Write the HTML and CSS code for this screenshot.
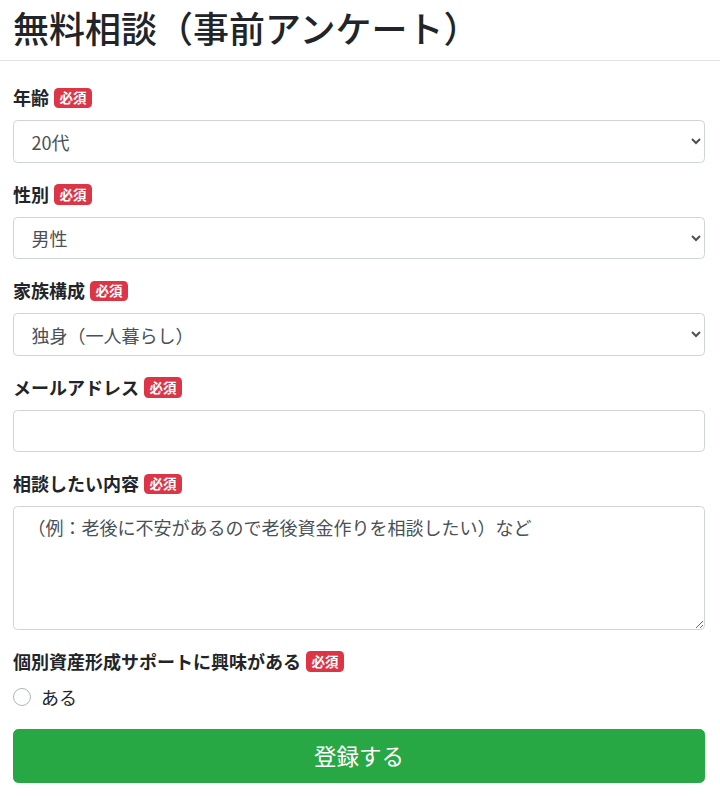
FILE: index.html
```html
<!DOCTYPE html>
<html lang="ja">
<head>
<meta charset="utf-8">
<title>無料相談（事前アンケート）</title>
<link rel="stylesheet" href="styles.css">
</head>
<body>
<header class="page-header">
  <h1 class="title">無料相談（事前アンケート）</h1>
</header>
<form class="form">
  <div class="group">
    <label class="label" for="age">年齢<span class="badge">必須</span></label>
    <select id="age" class="control select">
      <option>20代</option>
    </select>
  </div>
  <div class="group">
    <label class="label" for="sex">性別<span class="badge">必須</span></label>
    <select id="sex" class="control select">
      <option>男性</option>
    </select>
  </div>
  <div class="group">
    <label class="label" for="family">家族構成<span class="badge">必須</span></label>
    <select id="family" class="control select">
      <option>独身（一人暮らし）</option>
    </select>
  </div>
  <div class="group">
    <label class="label" for="mail">メールアドレス<span class="badge">必須</span></label>
    <input id="mail" class="control" type="email">
  </div>
  <div class="group">
    <label class="label" for="content">相談したい内容<span class="badge">必須</span></label>
    <textarea id="content" class="control textarea" rows="4" placeholder="（例：老後に不安があるので老後資金作りを相談したい）など"></textarea>
  </div>
  <div class="group">
    <div class="label">個別資産形成サポートに興味がある<span class="badge">必須</span></div>
    <label class="check">
      <input class="radio" type="radio" name="interest">
      <span>ある</span>
    </label>
  </div>
  <button class="submit" type="button">登録する</button>
</form>
</body>
</html>
```
FILE: styles.css
```css
html {
  font-size: 18px;
}
body {
  margin: 0;
  font-family: "Noto Sans CJK JP", "Noto Sans", sans-serif;
  font-size: 18px;
  line-height: 1.5;
  color: #212529;
  background: #fff;
}
.page-header {
  padding: 6px 15px 11px 13px;
  border-bottom: 1px solid #dee2e6;
}
.title {
  margin: 0;
  font-size: 36px;
  font-weight: 500;
  line-height: 1.2;
}
.form {
  padding: 23px 15px 0 13px;
}
.group {
  margin-bottom: 18px;
}
.label {
  display: block;
  margin-bottom: 9px;
  font-weight: 700;
  line-height: 27px;
}
.badge {
  display: inline-block;
  margin-left: 5px;
  padding: 3.5px 5.4px;
  font-size: 13.5px;
  font-weight: 700;
  line-height: 1;
  color: #fff;
  background: #dc3545;
  border-radius: 4.5px;
  vertical-align: 2px;
}
.control {
  display: block;
  box-sizing: border-box;
  width: 100%;
  height: 42.5px;
  padding: 6.75px 13.5px;
  font-family: inherit;
  font-size: 18px;
  line-height: 1.5;
  color: #495057;
  background: #fff;
  border: 1px solid #ced4da;
  border-radius: 4.5px;
  margin: 0;
}
.select {
  padding-left: 13.5px;
}
.textarea {
  height: 123.5px;
  resize: vertical;
}
.textarea::placeholder {
  color: #495057;
  opacity: 1;
}
.check {
  display: flex;
  align-items: center;
  gap: 10px;
  line-height: 27px;
}
.radio {
  appearance: none;
  -webkit-appearance: none;
  width: 18px;
  height: 18px;
  margin: 0;
  border: 1.5px solid #adb5bd;
  border-radius: 50%;
  background: #fff;
  box-sizing: border-box;
}
.submit {
  display: block;
  width: 100%;
  box-sizing: border-box;
  padding: 9.5px 18px;
  font-family: inherit;
  font-size: 22.5px;
  line-height: 1.5;
  color: #fff;
  background: #28a745;
  border: 1px solid #28a745;
  border-radius: 5.4px;
}
```
